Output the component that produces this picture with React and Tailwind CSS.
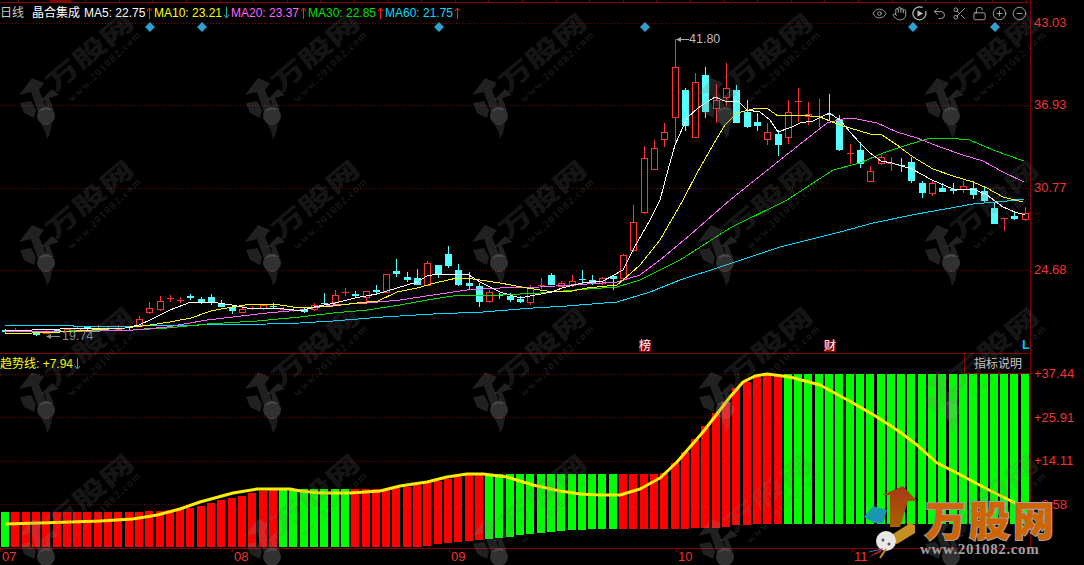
import { Eye, Hand, Undo2, Scissors, LockOpen, CirclePlus, CircleMinus } from 'lucide-react'

const DARK_RED = '#800000'
const barX = i => Math.round(5 + 10.3 * i)

// [top, bottom, high, low, color], pixel rows of the picture
const CANDLES = [
  [330, 332, 329, 333, 'c'], [330, 330, 328, 331, 'r'], [330, 331, 329, 332, 'r'], [333, 335, 332, 336, 'c'],
  [331, 333, 330, 334, 'r'], [330, 332, 329, 333, 'c'], [329, 331, 328, 332, 'r'], [328, 331, 326, 332, 'r'],
  [327, 329, 326, 330, 'c'], [328, 328, 325, 331, 'r'], [328, 328, 326, 330, 'r'], [328, 329, 325, 330, 'r'],
  [327, 328, 326, 330, 'c'], [319, 326, 316, 327, 'r'], [308, 312, 302, 314, 'r'], [301, 309, 296, 311, 'r'],
  [298, 298, 295, 302, 'r'], [300, 300, 297, 303, 'r'], [296, 298, 294, 300, 'c'], [299, 302, 297, 304, 'c'],
  [297, 303, 294, 305, 'c'], [303, 307, 300, 307, 'c'], [307, 311, 306, 314, 'c'], [309, 312, 306, 313, 'r'],
  [308, 308, 306, 310, 'r'], [305, 308, 304, 310, 'r'], [306, 306, 303, 309, 'c'], [309, 309, 307, 311, 'r'],
  [310, 310, 308, 312, 'r'], [309, 312, 308, 313, 'c'], [305, 309, 303, 311, 'r'], [303, 303, 293, 305, 'c'],
  [295, 302, 290, 306, 'r'], [292, 292, 288, 296, 'r'], [294, 296, 291, 297, 'c'], [291, 297, 291, 302, 'r'],
  [290, 292, 285, 294, 'c'], [274, 292, 274, 292, 'r'], [271, 274, 259, 277, 'c'], [277, 280, 272, 282, 'c'],
  [278, 285, 269, 285, 'c'], [263, 285, 261, 286, 'r'], [265, 274, 265, 278, 'c'], [254, 266, 246, 268, 'c'],
  [270, 285, 264, 286, 'c'], [283, 286, 272, 290, 'c'], [286, 302, 283, 307, 'c'], [292, 301, 290, 303, 'r'],
  [295, 295, 293, 299, 'c'], [296, 300, 293, 302, 'c'], [299, 302, 296, 303, 'c'], [287, 302, 285, 305, 'r'],
  [285, 285, 278, 289, 'r'], [275, 285, 273, 285, 'c'], [283, 286, 281, 287, 'r'], [281, 285, 275, 287, 'r'],
  [279, 279, 270, 285, 'c'], [280, 284, 275, 285, 'c'], [278, 283, 277, 285, 'r'], [276, 279, 275, 290, 'c'],
  [255, 278, 254, 279, 'r'], [222, 250, 205, 252, 'r'], [158, 212, 146, 214, 'r'], [148, 169, 140, 169, 'r'],
  [132, 139, 123, 147, 'r'], [67, 117, 39, 143, 'r'], [90, 126, 88, 131, 'c'], [82, 137, 73, 137, 'r'],
  [75, 112, 67, 118, 'c'], [100, 108, 84, 123, 'r'], [88, 97, 63, 106, 'r'], [90, 123, 85, 123, 'c'],
  [112, 127, 100, 128, 'c'], [122, 126, 113, 131, 'c'], [132, 139, 123, 145, 'r'], [134, 145, 130, 156, 'c'],
  [112, 137, 100, 144, 'r'], [101, 101, 88, 122, 'r'], [114, 116, 102, 125, 'r'], [116, 116, 99, 127, 'r'],
  [114, 114, 94, 120, 'c'], [119, 150, 115, 151, 'c'], [153, 153, 144, 164, 'r'], [150, 164, 142, 168, 'c'],
  [171, 181, 166, 181, 'r'], [157, 163, 155, 165, 'r'], [163, 163, 157, 171, 'r'], [165, 165, 158, 172, 'c'],
  [162, 181, 157, 183, 'c'], [183, 193, 181, 198, 'c'], [183, 193, 180, 196, 'r'], [188, 192, 183, 192, 'c'],
  [189, 191, 183, 194, 'c'], [186, 189, 181, 193, 'r'], [188, 195, 181, 199, 'c'], [191, 201, 186, 202, 'c'],
  [208, 224, 203, 224, 'c'], [218, 218, 218, 231, 'r'], [216, 219, 211, 220, 'c'], [213, 219, 207, 221, 'r'],
]

const MA_LINES = [
  ['#00dcff', '5,325 73,325 74,327 200,325 267,324 300,323 333,321 383,317 433,314 483,312 533,308 567,306 617,302 650,292 680,280 720,267 780,247 840,232 873,223 917,214 973,204 1007,201 1024,199'],
  ['#00e000', '5,332 133,330 167,328 207,324 257,321 300,317 333,313 367,310 400,305 433,299 453,296 500,295 540,293 587,289 617,287 640,280 680,260 730,228 787,200 833,170 860,163 883,153 907,145 927,139 947,138 970,140 993,150 1024,161'],
  ['#ff66ff', '5,331 67,332 133,330 167,327 207,320 233,317 267,313 300,310 333,305 367,303 400,300 433,295 467,290 500,288 540,287 587,284 617,282 640,275 660,260 690,235 730,200 780,160 827,123 847,118 857,119 877,123 897,132 917,138 940,147 963,155 983,161 1003,172 1024,182'],
  ['#ffff00', '5,334 60,332 125,328 150,325 170,322 191,318 211,311 232,307 252,304 280,305 300,308 333,306 357,303 378,301 397,292 417,288 435,283 457,278 473,279 500,283 527,288 547,291 567,292 587,288 617,285 623,280 640,265 660,240 683,200 697,173 713,145 725,125 737,113 757,108 768,109 778,116 800,115 820,117 840,125 870,134 882,135 897,145 913,157 933,169 953,176 973,182 987,188 1003,197 1023,202'],
  ['#ffffff', '5,331 60,329 125,328 139,325 150,320 170,310 191,302 211,302 232,305 252,309 273,308 294,310 304,310 314,307 335,303 355,298 377,294 397,288 417,282 427,276 437,274 458,274 469,275 480,282 500,292 520,298 530,296 541,294 552,292 562,288 582,283 603,281 623,270 634,248 650,220 660,200 668,170 675,145 687,118 698,108 715,97 727,102 738,101 747,110 760,112 770,120 778,132 792,127 800,123 813,121 829,113 840,120 850,132 860,143 870,153 881,161 892,163 912,169 932,180 953,189 973,189 987,195 1003,207 1015,212 1025,215'],
]

const BAR_TOPS = [
  512, 512, 512, 512, 512, 512, 512, 512, 512, 512, 512, 512, 512, 512, 511, 511, 510, 509, 508, 506,
  503, 500, 498, 496, 493, 491, 490, 490, 490, 489, 489, 489, 489, 489, 489, 489, 489, 489, 488, 487,
  485, 483, 481, 479, 477, 475, 475, 474, 474, 474, 474, 474, 474, 474, 474, 474, 474, 474, 474, 474,
  474, 474, 474, 474, 473, 463, 452, 439, 426, 413, 402, 388, 382, 377, 374, 374, 374, 374, 374, 374,
  374, 374, 374, 374, 374, 374, 374, 374, 374, 374, 374, 374, 374, 374, 374, 374, 374, 374, 374, 374,
]
const BAR_BOTTOMS = [
  547, 547, 547, 547, 547, 547, 547, 547, 547, 547, 547, 547, 547, 547, 547, 547, 547, 547, 547, 547,
  547, 547, 547, 547, 547, 547, 547, 547, 547, 547, 547, 547, 547, 547, 547, 547, 547, 547, 547, 547,
  547, 546, 544, 543, 542, 541, 540, 539, 538, 537, 535, 534, 533, 532, 531, 530, 530, 529, 529, 529,
  529, 529, 529, 529, 529, 529, 529, 528, 528, 528, 527, 525, 525, 524, 524, 524, 524, 524, 524, 524,
  524, 524, 524, 524, 524, 524, 524, 524, 524, 524, 524, 524, 524, 524, 524, 524, 524, 524, 524, 524,
]
const isGreen = i => i === 0 || (i >= 27 && i <= 33) || (i >= 47 && i <= 59) || i >= 76

const TREND = '5,524 40,523 100,521 133,519 157,515 180,509 200,502 233,493 257,489 290,489 300,491 320,493 350,493 380,491 400,486 427,482 447,477 467,474 483,474 507,477 533,485 560,491 580,494 600,495 620,495 640,489 660,478 677,462 690,447 703,432 720,410 730,397 743,382 755,376 767,374 790,377 820,385 853,403 877,417 900,432 917,445 937,463 957,473 985,488 1013,502 1023,507'

const MA_LABELS = [
  ['MA5: 22.75', 'text-white', 'up', 'w-[70px]'],
  ['MA10: 23.21', 'text-[#ffff00]', 'down', 'w-[77px]'],
  ['MA20: 23.37', 'text-[#ff66ff]', 'up', 'w-[77px]'],
  ['MA30: 22.85', 'text-[#00e000]', 'up', 'w-[77px]'],
  ['MA60: 21.75', 'text-[#00dcff]', 'up', 'w-[77px]'],
]

function TrendArrow({ dir }) {
  if (dir === 'up') {
    return (
      <svg width="7" height="12" viewBox="0 0 7 12" className="inline-block align-[-2px] ml-px" stroke="#ff2020" fill="none">
        <path d="M3.5 1V12M1 4 3.5 1 6 4" />
      </svg>
    )
  }
  return (
    <svg width="7" height="12" viewBox="0 0 7 12" className="inline-block align-[-2px] ml-px" stroke="#20b0a0" fill="none">
      <path d="M3.5 0V11M1 8 3.5 11 6 8" />
    </svg>
  )
}

function Candle({ i, c }) {
  const [top, bottom, high, low, color] = c
  const x = barX(i)
  const stroke = color === 'r' ? '#ff3232' : '#54ffff'
  return (
    <g shapeRendering="crispEdges">
      <line x1={x + 0.5} x2={x + 0.5} y1={high} y2={top} stroke={stroke} />
      <line x1={x + 0.5} x2={x + 0.5} y1={bottom} y2={low} stroke={stroke} />
      {top === bottom ? (
        <line x1={x - 3} x2={x + 4} y1={top + 0.5} y2={top + 0.5} stroke={stroke} />
      ) : color === 'r' ? (
        <rect x={x - 2.5} y={top + 0.5} width={6} height={bottom - top} fill="#000" stroke={stroke} />
      ) : (
        <rect x={x - 3} y={top} width={7} height={bottom - top} fill={stroke} />
      )}
    </g>
  )
}

function DottedLine({ y }) {
  return <line x1="0" x2="1030" y1={y + 0.5} y2={y + 0.5} stroke={DARK_RED} strokeDasharray="1 2" shapeRendering="crispEdges" />
}

function PriceChart() {
  return (
    <svg width="1030" height="353" viewBox="0 0 1030 353" className="block">
      <line x1="0" x2="1030" y1="2.5" y2="2.5" stroke={DARK_RED} shapeRendering="crispEdges" />
      <rect x="50" y="0" width="21" height="2" fill={DARK_RED} />
      {Array.from({ length: 31 }, (_, i) => (
        <line key={i} x1={18.5 + i * 33.6} x2={18.5 + i * 33.6} y1="0" y2="2" stroke={DARK_RED} shapeRendering="crispEdges" />
      ))}
      {[23, 105, 188, 270].map(y => <DottedLine key={y} y={y} />)}
      {[150, 202, 439, 645, 913, 995].map(x => (
        <polygon key={x} points={`${x},22 ${x + 5},27 ${x},32 ${x - 5},27`} fill="#2f9fd0" />
      ))}
      {CANDLES.map((c, i) => <Candle key={i} i={i} c={c} />)}
      {MA_LINES.map(([color, points]) => (
        <polyline key={color} points={points} fill="none" stroke={color} shapeRendering="crispEdges" />
      ))}
      <line x1="680" x2="689" y1="39.5" y2="39.5" stroke="#aaa" />
      <polygon points="676,39.5 681,37 681,42" fill="#aaa" />
      <text x="689" y="43" fill="#bbb" fontSize="12.5">41.80</text>
      <line x1="50" x2="60" y1="336.5" y2="336.5" stroke="#888" />
      <polygon points="46,336.5 51,334 51,339" fill="#888" />
      <text x="62" y="340" fill="#8c8c8c" fontSize="12.5">19.74</text>
    </svg>
  )
}

function TrendChart() {
  return (
    <svg width="1030" height="194" viewBox="0 354 1030 194" className="block">
      {[374, 417, 461, 504].map(y => <DottedLine key={y} y={y} />)}
      {BAR_TOPS.map((top, i) => (
        <rect
          key={i}
          x={barX(i) - 4}
          y={top}
          width="8"
          height={BAR_BOTTOMS[i] - top}
          fill={isGreen(i) ? '#00ff00' : '#ff0000'}
          shapeRendering="crispEdges"
        />
      ))}
      <polyline points={TREND} fill="none" stroke="#ffee00" strokeWidth="3" strokeLinejoin="round" />
    </svg>
  )
}

function WatermarkTile() {
  return (
    <svg width="226" height="147" viewBox="0 0 226 147" className="block overflow-visible">
      <text
        x="90"
        y="61"
        textAnchor="middle"
        transform="rotate(-40 90 53)"
        fontSize="24"
        fontWeight="900"
        textLength="106"
        lengthAdjust="spacingAndGlyphs"
        fill="#707070"
        fillOpacity="0.2"
      >
        万股网
      </text>
      <text
        x="104"
        y="70"
        textAnchor="middle"
        transform="rotate(-44 104 66)"
        fontSize="11"
        fontWeight="700"
        letterSpacing="1.2"
        fontFamily="'Liberation Serif', serif"
        fill="#707070"
        fillOpacity="0.22"
      >
        www.201082.com
      </text>
      <g fill="#808080" fillOpacity="0.26">
        <polygon points="19,95 32,78 44,83 39,90 47,109 38,112 31,92" />
        <polygon points="59,95 49,98 54,110 47,110 45,100 41,100 52,89" />
        <polygon points="20,103 31,101 36,110 34,118 24,113" />
      </g>
      <circle cx="46" cy="116" r="9" fill="#999" fillOpacity="0.32" />
      <polygon points="41,124 52,124 50,134 47,139 45,131" fill="#808080" fillOpacity="0.22" />
    </svg>
  )
}

function PlayIcon() {
  return (
    <svg width="15" height="15" viewBox="0 0 15 15" fill="none" stroke="currentColor" strokeWidth="1.2">
      <path d="M10.5 1.6A6.5 6.5 0 1 0 13.5 5" />
      <path d="M5.5 4.2 11 7.5 5.5 10.8Z" fill="currentColor" stroke="none" />
    </svg>
  )
}

function Toolbar() {
  const icons = [Eye, Hand, PlayIcon, Undo2, Scissors, LockOpen, CirclePlus, CircleMinus]
  return (
    <div className="absolute top-[6px] right-[3px] flex gap-[5px] text-[#bdbdbd]">
      {icons.map((Icon, i) => (
        <span key={i} className="block w-[15px] h-[15px]">
          <Icon size={15} strokeWidth={1.3} />
        </span>
      ))}
    </div>
  )
}

function AxisLabel({ children, className }) {
  return <div className={`text-[13px] leading-[16px] text-[#f03232] ${className}`}>{children}</div>
}

function SiteLogo() {
  return (
    <div className="absolute left-[862px] top-[484px] w-[200px] h-[78px]">
      <svg width="60" height="78" viewBox="862 484 60 78" className="absolute left-0 top-0">
        <defs>
          <linearGradient id="logoArrow" x1="0" y1="0" x2="0" y2="1">
            <stop offset="0" stopColor="#a83818" />
            <stop offset="1" stopColor="#a86000" />
          </linearGradient>
          <linearGradient id="logoTeal" x1="0" y1="0" x2="1" y2="1">
            <stop offset="0" stopColor="#10a0a0" />
            <stop offset="1" stopColor="#208fc0" />
          </linearGradient>
        </defs>
        <polygon points="903,486 917,501 908,501 900,527 890,527 890,495 882,495" fill="url(#logoArrow)" />
        <polygon points="864,517 873,506 887,510 883,523 874,523" fill="url(#logoTeal)" />
        <polygon points="915,525 907,523 909,528 895,542 897,537 915,533" fill="#d09020" />
        <polygon points="885,539 912,522 915,533 897,544" fill="#c89020" />
        <circle cx="886" cy="541" r="10" fill="#e8e8e8" />
        <circle cx="883" cy="540" r="1.5" fill="#555" />
        <circle cx="889" cy="544" r="1.5" fill="#555" />
        <path d="M867 558 883 548 881 552Z" fill="#c01818" />
        <path d="M869 552 882 549" stroke="#2080c0" />
        <path d="M880 558 886 549" stroke="#d09020" strokeWidth="2" />
      </svg>
      <div className="absolute left-[63px] top-[13px] w-[130px] text-[41px] leading-[42px] tracking-[3px] font-black text-[#d06400] whitespace-nowrap font-['Noto_Sans_CJK_SC',sans-serif] [paint-order:stroke] [-webkit-text-stroke:2px_#a0a0a0]">
        万股网
      </div>
      <div className="absolute left-[58px] top-[58px] text-[15px] leading-[15px] tracking-[0.6px] font-bold text-[#a0a0a0] whitespace-nowrap font-['Liberation_Serif',serif]">
        www.201082.com
      </div>
    </div>
  )
}

export default function App() {
  return (
    <div className="relative w-[1084px] h-[565px] bg-black overflow-hidden font-['Liberation_Sans','Noto_Sans_CJK_SC',sans-serif] text-xs">
      {/* K线 */}
      <section className="flex h-[354px]">
        <div className="relative w-[1031px] border-r border-b border-[#800000]">
          <PriceChart />
          <div className="absolute top-[5px] left-0 flex items-center leading-[16px] whitespace-nowrap">
            <span className="w-[32px] text-[#c8c8c8]">日线</span>
            <span className="w-[52px] text-white">晶合集成</span>
            {MA_LABELS.map(([label, color, dir, width]) => (
              <span key={label} className={`${width} ${color}`}>
                {label}
                <TrendArrow dir={dir} />
              </span>
            ))}
          </div>
          <Toolbar />
          <span className="absolute left-[639px] top-[340px] w-[12px] h-[12px] bg-[#800000] text-white leading-[12px]">榜</span>
          <span className="absolute left-[824px] top-[340px] w-[12px] h-[12px] bg-[#800000] text-white leading-[12px]">财</span>
          <span className="absolute left-[1022px] top-[337px] text-[13px] leading-[16px] font-bold text-[#00bfff]">L</span>
        </div>
        <div className="flex-1 pl-[3px] pt-[15px]">
          {['43.03', '36.93', '30.77', '24.68'].map(v => (
            <AxisLabel key={v} className="h-[82.3px]">{v}</AxisLabel>
          ))}
        </div>
      </section>

      {/* 趋势线 */}
      <section className="flex h-[194px]">
        <div className="relative w-[1031px] border-r border-[#800000]">
          <TrendChart />
          <div className="absolute top-[2px] left-0 leading-[16px] text-[#ffff00] whitespace-nowrap">
            趋势线: +7.94
            <TrendArrow dir="down" />
          </div>
          <div className="absolute top-0 right-0 w-[66px] h-[20px] pl-[9px] border-l border-b border-[#800000] bg-black text-[#cccccc] leading-[20px]">
            指标说明
          </div>
        </div>
        <div className="flex-1 pl-[3px] pt-[12px]">
          {['+37.44', '+25.91', '+14.11', '+2.58'].map(v => (
            <AxisLabel key={v} className="h-[43.6px]">{v}</AxisLabel>
          ))}
        </div>
      </section>

      {/* 日期 */}
      <div className="grid grid-cols-[232px_217px_227px_176px_1fr] w-[1031px] h-[17px] border-t border-[#800000] text-[13px] leading-[16px] text-[#f03232]">
        {['07', '08', '09', '10', '11'].map(d => (
          <div key={d} className="flex items-start">
            <span className="w-px h-[3px] bg-[#800000]" />
            <span className="ml-px">{d}</span>
          </div>
        ))}
      </div>

      {/* 水印 */}
      <div className="absolute inset-0 pointer-events-none grid grid-cols-[repeat(5,226.3px)] grid-rows-[repeat(4,147px)]">
        {Array.from({ length: 20 }, (_, i) => <WatermarkTile key={i} />)}
      </div>
      <SiteLogo />
    </div>
  )
}
